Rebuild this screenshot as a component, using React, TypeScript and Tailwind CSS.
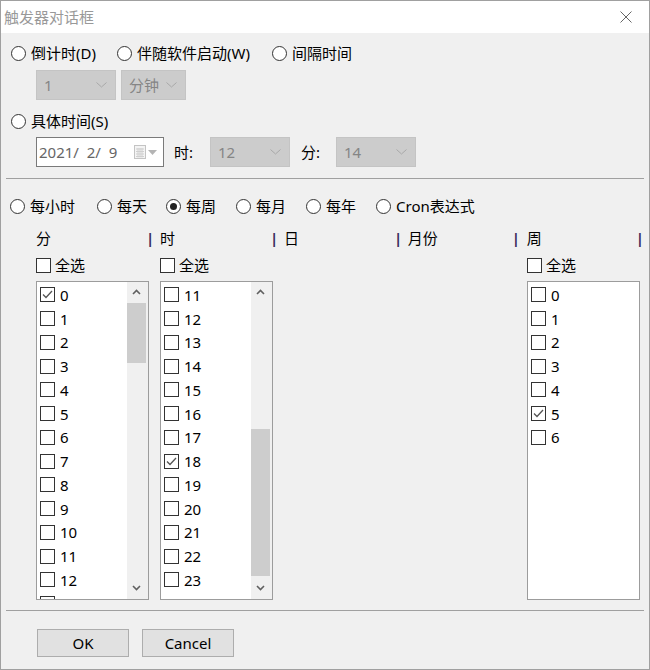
import React from 'react';

type RadioProps = { label: string; checked?: boolean; className?: string };

function Radio({ label, checked, className }: RadioProps) {
    return (
        <div className={`flex items-center shrink-0 ${className ?? ''}`}>
            <span className="w-[15px] h-[15px] rounded-full border border-[#333333] bg-white flex items-center justify-center shrink-0">
                {checked && <span className="w-[7px] h-[7px] rounded-full bg-[#222222]" />}
            </span>
            <span className="ml-[5px] whitespace-nowrap">{label}</span>
        </div>
    );
}

function CheckBox({ checked }: { checked?: boolean }) {
    return (
        <span className="w-[15px] h-[15px] border border-[#333333] bg-white shrink-0 flex items-center justify-center">
            {checked && (
                <svg width="11" height="9" viewBox="0 0 11 9">
                    <path d="M1 4.5 L4 7.5 L10 1" fill="none" stroke="#555555" strokeWidth="1.3" />
                </svg>
            )}
        </span>
    );
}

function Check({ label, checked }: { label: string; checked?: boolean }) {
    return (
        <div className="flex items-center h-[20px]">
            <CheckBox checked={checked} />
            <span className="ml-[4px]">{label}</span>
        </div>
    );
}

function Chevron({ up }: { up?: boolean }) {
    return (
        <svg width="9" height="6" viewBox="0 0 9 6">
            <path d={up ? 'M1 5 L4.5 1.5 L8 5' : 'M1 1 L4.5 4.5 L8 1'} fill="none" stroke="#606060" strokeWidth="1.6" />
        </svg>
    );
}

// Disabled combobox
function Combo({ value, className }: { value: string; className: string }) {
    return (
        <div className={`h-[30px] bg-[#cccccc] border border-[#c4c4c4] flex items-center justify-between pl-[7px] pr-[8px] text-[#858585] ${className}`}>
            <span>{value}</span>
            <svg width="11" height="6" viewBox="0 0 11 6">
                <path d="M0.5 0.5 L5.5 5 L10.5 0.5" fill="none" stroke="#a8a8a8" strokeWidth="1" />
            </svg>
        </div>
    );
}

type ListProps = {
    items: { n: number; checked?: boolean }[];
    className: string;
    partial?: boolean;
    scroll?: { top: string; height: string };
};

function CheckList({ items, className, partial, scroll }: ListProps) {
    return (
        <div className={`h-[319px] border border-[#9c9c9c] bg-white flex overflow-hidden ${className}`}>
            <div className="flex-1 pt-[1px] overflow-hidden">
                {items.map((it) => (
                    <div key={it.n} className="h-[23.75px] flex items-center pl-[3px]">
                        <CheckBox checked={it.checked} />
                        <span className="ml-[5px]">{it.n}</span>
                    </div>
                ))}
                {/* row scrolled half out of view */}
                {partial && (
                    <div className="h-[23.75px] flex items-center pl-[3px]">
                        <CheckBox />
                    </div>
                )}
            </div>
            {scroll && (
                <div className="w-[21px] pr-[2px] bg-[#f0f0f0] flex flex-col shrink-0">
                    <div className="h-[20px] flex items-center justify-center shrink-0">
                        <Chevron up />
                    </div>
                    <div className="flex-1 flex flex-col">
                        <div className={`${scroll.top} shrink-0`} />
                        <div className={`${scroll.height} bg-[#cdcdcd] shrink-0`} />
                    </div>
                    <div className="h-[20px] flex items-center justify-center shrink-0 mb-[1px]">
                        <Chevron />
                    </div>
                </div>
            )}
        </div>
    );
}

const range = (a: number, b: number, checkedN: number) =>
    Array.from({ length: b - a + 1 }, (_, i) => ({ n: a + i, checked: a + i === checkedN }));

export default function App() {
    return (
        <div className="w-[650px] h-[670px] border border-[#a0a0a0] bg-[#f0f0f0] flex flex-col text-[15px] leading-[20px] text-black font-['Noto_Sans','Noto_Sans_CJK_SC',sans-serif] overflow-hidden">
            {/* Title bar */}
            <div className="h-[32px] bg-white flex items-center justify-between pl-[3px] pr-[17px] shrink-0">
                <span className="text-[#999999]">触发器对话框</span>
                <svg width="12" height="12" viewBox="0 0 12 12">
                    <path d="M0.5 0.5 L11.5 11.5 M11.5 0.5 L0.5 11.5" stroke="#666666" strokeWidth="1" />
                </svg>
            </div>

            <div className="flex flex-col pl-[10px] pr-[5px]">
                {/* Trigger type */}
                <div className="flex items-center h-[20px] mt-[10px]">
                    <Radio label="倒计时(D)" className="w-[106px]" />
                    <Radio label="伴随软件启动(W)" className="w-[155px]" />
                    <Radio label="间隔时间" />
                </div>
                <div className="flex ml-[25px] mt-[7px] gap-[5px]">
                    <Combo value="1" className="w-[80px]" />
                    <Combo value="分钟" className="w-[65px]" />
                </div>

                <div className="flex items-center h-[20px] mt-[11px]">
                    <Radio label="具体时间(S)" />
                </div>
                <div className="flex items-center ml-[25px] mt-[6px]">
                    <div className="w-[128px] h-[30px] bg-white border border-[#7a7a7a] flex items-center pl-[2px] pr-[6px] justify-between">
                        <span className="text-[#666666] whitespace-pre">2021/  2/  9</span>
                        <span className="flex items-center gap-[2px]">
                            <svg width="12" height="14" viewBox="0 0 12 14">
                                <rect x="0.5" y="0.5" width="11" height="13" fill="#f4f4f4" stroke="#c4c4c4" />
                                <path d="M2 4 H10 M2 6.5 H10 M2 9 H10 M2 11.5 H10 M4 3 V12.5 M6 3 V12.5 M8 3 V12.5" stroke="#d0d0d0" strokeWidth="1" />
                            </svg>
                            <svg width="9" height="5" viewBox="0 0 9 5">
                                <path d="M0 0 H9 L4.5 5 Z" fill="#b4b4b4" />
                            </svg>
                        </span>
                    </div>
                    <span className="ml-[10px] w-[36px]">时:</span>
                    <Combo value="12" className="w-[80px]" />
                    <span className="ml-[11px] w-[35px]">分:</span>
                    <Combo value="14" className="w-[80px]" />
                </div>

                <div className="border-t border-[#a0a0a0] mt-[11px] ml-[-5px]" />

                {/* Frequency */}
                <div className="flex items-center h-[20px] mt-[17px] ml-[-1px]">
                    <Radio label="每小时" className="w-[87px]" />
                    <Radio label="每天" className="w-[69px]" />
                    <Radio label="每周" checked className="w-[70px]" />
                    <Radio label="每月" className="w-[70px]" />
                    <Radio label="每年" className="w-[70px]" />
                    <Radio label="Cron表达式" />
                </div>

                {/* Column headers */}
                <div className="flex items-center h-[20px] mt-[12px] ml-[25px]">
                    <div className="w-[124px] flex"><span className="w-[110px]">分</span><span className="text-[#3a2d5c] font-bold">|</span></div>
                    <div className="w-[124px] flex"><span className="w-[110px]">时</span><span className="text-[#3a2d5c] font-bold">|</span></div>
                    <div className="w-[124px] flex"><span className="w-[110px]">日</span><span className="text-[#3a2d5c] font-bold">|</span></div>
                    <div className="w-[119px] flex"><span className="w-[104px]">月份</span><span className="text-[#3a2d5c] font-bold">|</span></div>
                    <div className="flex"><span className="w-[109px]">周</span><span className="text-[#3a2d5c] font-bold">|</span></div>
                </div>

                <div className="flex items-center h-[20px] mt-[7px] ml-[25px]">
                    <div className="w-[124px]"><Check label="全选" /></div>
                    <div className="w-[367px]"><Check label="全选" /></div>
                    <Check label="全选" />
                </div>

                {/* Lists */}
                <div className="flex mt-[6px] ml-[25px]">
                    <CheckList items={range(0, 12, 0)} partial className="w-[113px]" scroll={{ top: 'h-[1px]', height: 'h-[60px]' }} />
                    <CheckList items={range(11, 23, 18)} className="w-[113px] ml-[11px]" scroll={{ top: 'h-[127px]', height: 'h-[147px]' }} />
                    <CheckList items={range(0, 6, 5)} className="w-[113px] ml-[254px]" />
                </div>

                <div className="border-t border-[#a0a0a0] mt-[10px] ml-[-5px]" />

                {/* Buttons */}
                <div className="flex mt-[18px] ml-[26px] gap-[13px]">
                    <button className="w-[92px] h-[28px] bg-[#e1e1e1] border border-[#adadad] flex items-center justify-center">OK</button>
                    <button className="w-[92px] h-[28px] bg-[#e1e1e1] border border-[#adadad] flex items-center justify-center">Cancel</button>
                </div>
            </div>
        </div>
    );
}
